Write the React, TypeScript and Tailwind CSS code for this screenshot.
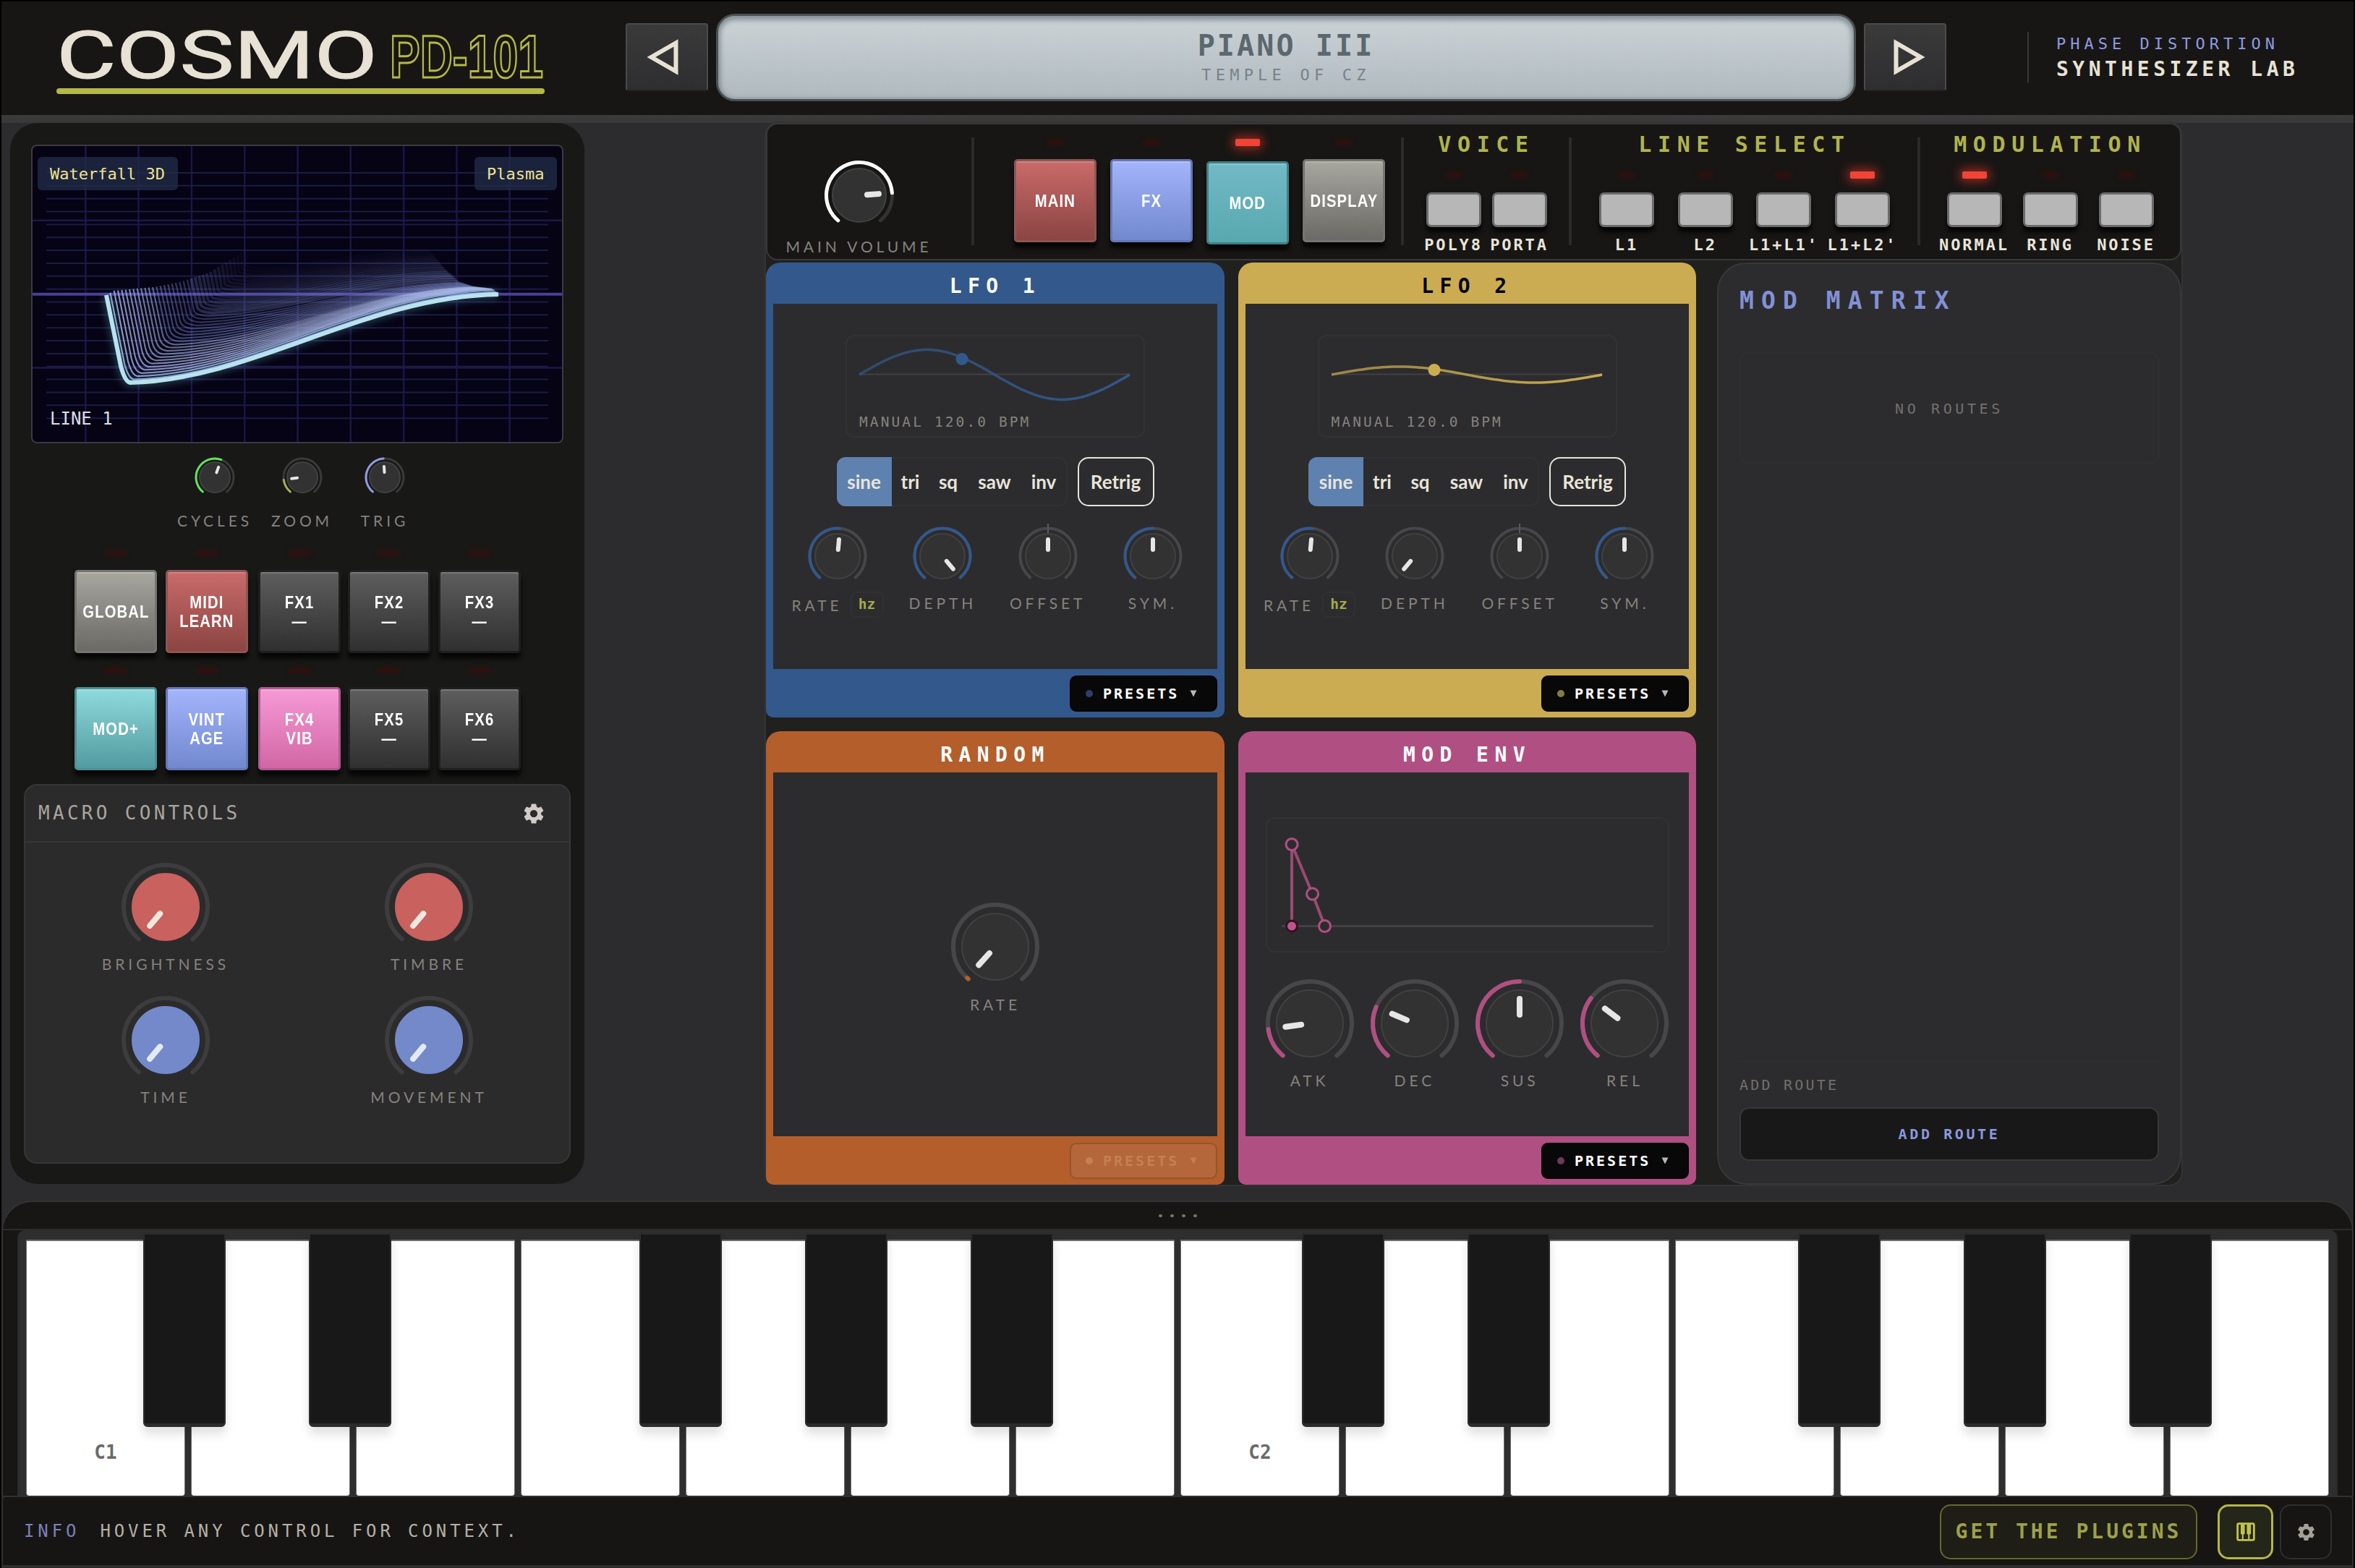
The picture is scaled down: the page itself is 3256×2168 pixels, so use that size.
import type { ReactNode } from 'react';
import clsx from 'clsx';
import { MdOutlinePiano, MdSettings } from 'react-icons/md';

const MONO = "font-['DejaVu_Sans_Mono',monospace]";
const LABEL = "font-['Lato',sans-serif] text-[21px] leading-[24px] tracking-[4.9px] text-[#85827d] whitespace-nowrap";

const BLUE = '#33588c';
const PINK = '#b04f82';

/* ---------- knobs ---------- */

function polar(c: number, r: number, deg: number) {
  const a = (deg * Math.PI) / 180;
  return [c + r * Math.sin(a), c - r * Math.cos(a)];
}

function arc(c: number, r: number, from: number, to: number) {
  const [x1, y1] = polar(c, r, from);
  const [x2, y2] = polar(c, r, to);
  return `M${x1} ${y1}A${r} ${r} 0 ${to - from > 180 ? 1 : 0} 1 ${x2} ${y2}`;
}

type KnobProps = {
  size: number;
  r: number;
  body: number;
  stroke: number;
  angle: number;
  hand: [number, number];
  handWidth: number;
  color?: string;
  fill?: string;
  rim?: string;
  track?: string;
  tip?: string;
  tick?: boolean;
};

function Knob({
  size,
  r,
  body,
  stroke,
  angle,
  hand,
  handWidth,
  color,
  fill = '#323232',
  rim = '#414141',
  track = '#47474a',
  tip = '#e6e6e6',
  tick,
}: KnobProps) {
  const c = size / 2;
  const [x1, y1] = polar(c, hand[0], angle);
  const [x2, y2] = polar(c, hand[1], angle);
  return (
    <svg width={size} height={size} viewBox={`0 0 ${size} ${size}`} className="block shrink-0">
      <path d={arc(c, r, -140, 140)} fill="none" stroke={track} strokeWidth={stroke} strokeLinecap="round" />
      {color && <path d={arc(c, r, -140, angle)} fill="none" stroke={color} strokeWidth={stroke} strokeLinecap="round" />}
      {tick && <path d={`M${c} 0V${c - body}`} stroke="#5a5a5c" strokeWidth={2} />}
      <circle cx={c} cy={c} r={body} fill={fill} stroke={rim} strokeWidth={2} />
      <path d={`M${x1} ${y1}L${x2} ${y2}`} stroke={tip} strokeWidth={handWidth} strokeLinecap="round" />
    </svg>
  );
}

const SmallKnob = (p: { angle: number; color?: string; tick?: boolean }) => (
  <Knob size={90} r={38.5} body={31} stroke={4} hand={[9, 23]} handWidth={6} {...p} />
);

const BigKnob = (p: { angle: number; color?: string; fill?: string; rim?: string; tip?: string; track?: string }) => (
  <Knob size={130} r={58} body={46} stroke={6} hand={[12, 34]} handWidth={8} {...p} />
);

const TinyKnob = (p: { angle: number; color: string }) => (
  <Knob size={64} r={26} body={21} stroke={3} hand={[7, 15]} handWidth={4} track="#3a3a3a" {...p} />
);

/* ---------- header ---------- */

function Logo() {
  return (
    <svg width="680" height="130" viewBox="0 -30 680 130" className="block overflow-visible">
      <text
        x="0"
        y="70"
        fontFamily="Roboto, sans-serif"
        fontSize="90"
        fill="#e8e2d5"
        stroke="#e8e2d5"
        strokeWidth="1"
        textLength="444"
        lengthAdjust="spacingAndGlyphs"
      >
        COSMO
      </text>
      <text
        x="461"
        y="69"
        fontFamily="Liberation Sans, sans-serif"
        fontWeight="700"
        fontSize="84"
        fill="none"
        stroke="#b4b845"
        strokeWidth="3"
        textLength="212"
        lengthAdjust="spacingAndGlyphs"
      >
        PD-101
      </text>
      <rect x="0" y="84" width="675" height="8" rx="4" fill="#b4b845" />
    </svg>
  );
}

function StepButton({ dir }: { dir: 'prev' | 'next' }) {
  return (
    <div className="flex h-[94px] w-[114px] items-center justify-center rounded-[4px] border-2 border-[#4a4a4b] border-b-[#232324] bg-linear-to-b from-[#3a3a3b] to-[#2e2e30]">
      <svg width="56" height="56" viewBox="0 0 56 56" className={clsx(dir === 'prev' && '-scale-x-100')}>
        <path d="M15.5 8.5V47.5L49.5 28Z" fill="none" stroke="#e8e2d5" strokeWidth="6" />
      </svg>
    </div>
  );
}

function Header() {
  return (
    <header className="flex h-[157px] shrink-0 items-start bg-[#171614]">
      <div className="mt-[6px] ml-[76px] w-[787px]">
        <Logo />
      </div>
      <div className="mt-[30px]">
        <StepButton dir="prev" />
      </div>
      <div
        className={clsx(
          MONO,
          'mt-[17px] ml-[11px] flex h-[121px] w-[1576px] flex-col items-center rounded-[26px] border-[3px] border-[#4b5053] bg-linear-to-b from-[#cbd3d7] to-[#b0b9be] pt-[17px] shadow-[inset_0_3px_6px_3px_rgba(70,84,90,0.5)]',
        )}
      >
        <div className="text-[40px] leading-[48px] font-bold tracking-[3.1px] text-[#5b686d]">PIANO III</div>
        <div className="mt-[3px] text-[22px] leading-[28px] tracking-[6.2px] text-[#76838a]">TEMPLE OF CZ</div>
      </div>
      <div className="mt-[30px] ml-[11px]">
        <StepButton dir="next" />
      </div>
      <div className={clsx(MONO, 'mt-[42px] ml-[112px] h-[70px] border-l-2 border-[#39393a] pl-[38px] whitespace-nowrap')}>
        <div className="mt-[3px] text-[22px] leading-[28px] tracking-[6px] text-[#8f9ae0]">PHASE DISTORTION</div>
        <div className="mt-[3px] text-[28px] leading-[36px] font-bold tracking-[5.5px] text-[#e8e2d5]">SYNTHESIZER LAB</div>
      </div>
    </header>
  );
}

/* ---------- pads and switches ---------- */

const PAD_TONES = {
  grey: 'bg-linear-to-b from-[#a7a69f] to-[#6b6a66] border-[#75746f]',
  red: 'bg-linear-to-b from-[#c96b6a] to-[#8b4542] border-[#8d5553]',
  dark: 'bg-linear-to-b from-[#5e5e5e] to-[#303030] border-[#1f1f1f]',
  teal: 'bg-linear-to-b from-[#8fdadd] to-[#529ba0] border-[#4f8f94]',
  tealFlat: 'bg-linear-to-b from-[#72b9c6] to-[#58a8ae] border-[#3f8086]',
  blue: 'bg-linear-to-b from-[#a4b4fb] to-[#7188cf] border-[#6678b4]',
  pink: 'bg-linear-to-b from-[#f59ad5] to-[#d266a5] border-[#b05c90]',
};

type Tone = keyof typeof PAD_TONES;

function Pad({ tone, lines }: { tone: Tone; lines: string[] }) {
  return (
    <div
      className={clsx(
        'flex h-[115px] w-[114px] flex-col items-center justify-center rounded-[5px] border-[3px] shadow-[0_8px_6px_rgba(0,0,0,0.75),inset_0_2px_1px_rgba(255,255,255,0.18)]',
        PAD_TONES[tone],
      )}
    >
      {lines.map((l) => (
        <div
          key={l}
          className="scale-x-[0.88] font-['Liberation_Sans',sans-serif] text-[23px] leading-[26px] font-bold tracking-[1.3px] whitespace-nowrap text-white"
        >
          {l}
        </div>
      ))}
    </div>
  );
}

function Led({ on, wide }: { on?: boolean; wide?: boolean }) {
  if (on) {
    return <div className="h-[10px] w-[34px] rounded-[2px] bg-[#ee4537] shadow-[0_0_14px_4px_rgba(226,50,38,0.6)]" />;
  }
  return <div className={clsx('h-[6px] rounded-full bg-[#3a0c0c] blur-[3px]', wide ? 'w-[30px]' : 'w-[22px]')} />;
}

function LedSlot({ on, wide, className }: { on?: boolean; wide?: boolean; className?: string }) {
  return (
    <div className={clsx('flex h-[10px] items-center justify-center', className)}>
      <Led on={on} wide={wide} />
    </div>
  );
}

function SwitchGroup({ title, cell, items, active }: { title: string; cell: string; items: string[]; active?: string }) {
  return (
    <div className={clsx(MONO, 'flex flex-1 flex-col items-center')}>
      <div className="mt-[11px] text-[30px] leading-[34px] font-bold tracking-[8.6px] whitespace-nowrap text-[#b0b44c]">{title}</div>
      <div className="mt-[20px] flex">
        {items.map((item) => (
          <div key={item} className={clsx('flex flex-col items-center', cell)}>
            <LedSlot on={item === active} />
            <div className="mt-[19px] h-[48px] w-[76px] rounded-[7px] border-[3px] border-[#6b6b6b] bg-[#b7b7b7] shadow-[0_7px_6px_rgba(0,0,0,0.8)]" />
            <div className="mt-[12px] text-[22px] leading-[26px] font-bold tracking-[2.9px] whitespace-nowrap text-[#e8e4da]">{item}</div>
          </div>
        ))}
      </div>
    </div>
  );
}

const Divider = () => <div className="mt-[18px] h-[149px] w-[4px] shrink-0 bg-[#2b2b2a]" />;

function ControlStrip() {
  const pads: { tone: Tone; label: string; on?: boolean }[] = [
    { tone: 'red', label: 'MAIN' },
    { tone: 'blue', label: 'FX' },
    { tone: 'tealFlat', label: 'MOD', on: true },
    { tone: 'grey', label: 'DISPLAY' },
  ];
  return (
    <div className="flex h-[190px] rounded-[16px] border-2 border-[#383839] bg-[#171614]">
      <div className="flex w-[253px] shrink-0 flex-col items-center">
        <div className="mt-[43px]">
          <Knob size={110} r={45.5} body={37} stroke={5} angle={86} hand={[11, 27]} handWidth={8} color="#ffffff" track="#333333" />
        </div>
        <div className={clsx(LABEL, 'mt-[4px]')}>MAIN VOLUME</div>
      </div>
      <div className="w-[29px] shrink-0" />
      <Divider />
      <div className="ml-[55px] flex gap-[19px]">
        {pads.map((p) => (
          <div key={p.label} className="w-[114px]">
            <LedSlot on={p.on} className="mt-[20px]" />
            <div className={p.on ? 'mt-[21px]' : 'mt-[18px]'}>
              <Pad tone={p.tone} lines={[p.label]} />
            </div>
          </div>
        ))}
      </div>
      <div className="w-[22px] shrink-0" />
      <Divider />
      <div className="flex w-[228px] shrink-0">
        <SwitchGroup title="VOICE" cell="w-[91px]" items={['POLY8', 'PORTA']} />
      </div>
      <Divider />
      <div className="flex w-[478px] shrink-0">
        <SwitchGroup title="LINE SELECT" cell="w-[108.7px]" items={['L1', 'L2', "L1+L1'", "L1+L2'"]} active="L1+L2'" />
      </div>
      <Divider />
      <SwitchGroup title="MODULATION" cell="w-[105px]" items={['NORMAL', 'RING', 'NOISE']} active="NORMAL" />
    </div>
  );
}

/* ---------- scope ---------- */

// heights of the two ends of the trace, from front (0) to back (1)
const LEFT_EDGE = [
  [0, 408],
  [0.05, 402],
  [0.34, 397],
  [0.53, 390],
  [0.74, 377],
  [1, 346],
];
const RIGHT_EDGE = [
  [0, 407],
  [0.07, 400],
  [0.34, 397],
  [0.56, 390],
  [0.75, 374],
  [0.9, 357],
  [1, 346],
];

function lookup(table: number[][], t: number) {
  const i = Math.max(1, table.findIndex((row) => row[0] >= t));
  const [t0, y0] = table[i - 1];
  const [t1, y1] = table[i];
  return y0 + ((y1 - y0) * (t - t0)) / (t1 - t0);
}

function trace(t: number) {
  const lx = 147 + 192 * t;
  const ly = lookup(LEFT_EDGE, t);
  const rx = 689 - 96 * t;
  const ry = lookup(RIGHT_EDGE, t);
  const dx = 176 + 164 * t;
  const dy = 529 - 158 * t;
  const w = rx - dx;
  const bend = 4 + 22 * t;
  return [
    `M${lx} ${ly}`,
    `L${lx + (dx - lx) * 0.7} ${ly + (dy - ly) * 0.82}`,
    `Q${dx - 3} ${dy - 1} ${dx + bend} ${dy}`,
    `C${dx + w * 0.34} ${dy - 4} ${rx - w * 0.36} ${ry + 3} ${rx} ${ry}`,
  ].join('');
}

const COLS = Array.from({ length: 9 }, (_, i) => 45 + 73.3 * (i + 1));
const ROWS = Array.from({ length: 20 }, (_, i) => 239 + 17.85 * i);
const TRACES = Array.from({ length: 36 }, (_, i) => 1 - i / 36);

function Scope() {
  return (
    <div className={clsx(MONO, 'relative h-[413px] w-[736px] overflow-hidden rounded-[8px] border-2 border-[#3d3940] bg-[#050314]')}>
      <svg width="732" height="409" viewBox="45 202 732 409" className="block">
        {COLS.map((x) => (
          <path key={x} d={`M${x} 202V611`} stroke="#1c1546" strokeWidth="2.5" />
        ))}
        {ROWS.map((y) => (
          <path key={y} d={`M64 ${y}H758`} stroke="#1a1d44" strokeWidth="2" />
        ))}
        <path d="M45 304.7H777M45 508.6H777" stroke="#1f174a" strokeWidth="2.5" />
        <path d="M45 406.8H777" stroke="#4a3f97" strokeWidth="4" />
        {TRACES.map((t) => (
          <path
            key={t}
            d={trace(t)}
            fill="none"
            stroke={t < 0.35 ? '#a9b5e6' : '#7f8cd0'}
            strokeWidth={t > 0.6 ? 4 : 2.2}
            opacity={0.03 + 0.85 * Math.pow(1 - t, 1.25)}
          />
        ))}
        <path d={trace(0)} fill="none" stroke="#69c4e0" strokeWidth="14" opacity="0.25" className="blur-[5px]" />
        <path d={trace(0)} fill="none" stroke="#b8e2ee" strokeWidth="6" />
      </svg>
      <div className="absolute top-[15px] left-[7px] flex h-[46px] w-[194px] items-center rounded-[6px] bg-[#202c46]/80 pl-[17px] text-[22px] text-[#f0e28c]">
        Waterfall 3D
      </div>
      <div className="absolute top-[15px] right-[7px] flex h-[46px] w-[114px] items-center rounded-[6px] bg-[#202c46]/80 pl-[17px] text-[22px] text-[#f0e28c]">
        Plasma
      </div>
      <div className="absolute bottom-[16px] left-[24px] text-[24px] leading-[32px] text-[#dcdce6]">LINE 1</div>
    </div>
  );
}

/* ---------- left panel ---------- */

function PadRow({ pads }: { pads: { tone: Tone; lines: string[] }[] }) {
  return (
    <div className="grid grid-cols-[126px_128px_124px_125px_114px] pl-[89px]">
      {pads.map((p) => (
        <div key={p.lines[0]} className="w-[114px]">
          <LedSlot wide />
          <div className="mt-[18px]">
            <Pad tone={p.tone} lines={p.lines} />
          </div>
        </div>
      ))}
    </div>
  );
}

const MACROS = [
  { label: 'BRIGHTNESS', fill: '#c9615f', tip: '#f0e8dc' },
  { label: 'TIMBRE', fill: '#c9615f', tip: '#f0e8dc' },
  { label: 'TIME', fill: '#7389ca', tip: '#e2ebf5' },
  { label: 'MOVEMENT', fill: '#7389ca', tip: '#e2ebf5' },
];

function LeftPanel() {
  return (
    <aside className="ml-[12px] flex h-[1467px] w-[794px] shrink-0 flex-col rounded-[38px] bg-[#181817] pt-[30px]">
      <div className="pl-[29px]">
        <Scope />
      </div>
      <div className="mt-[15px] flex pl-[223px]">
        <div className="flex w-[120px] flex-col items-center">
          <TinyKnob angle={20} color="#5ee45a" />
          <div className={clsx(LABEL, 'mt-[16px]')}>CYCLES</div>
        </div>
        <div className="flex w-[121px] flex-col items-center">
          <TinyKnob angle={-97} color="#a8ad55" />
          <div className={clsx(LABEL, 'mt-[16px]')}>ZOOM</div>
        </div>
        <div className="flex w-[108px] flex-col items-center">
          <TinyKnob angle={-4} color="#8f9ae0" />
          <div className={clsx(LABEL, 'mt-[16px]')}>TRIG</div>
        </div>
      </div>
      <div className="mt-[28px] flex flex-col gap-[19px]">
        <PadRow
          pads={[
            { tone: 'grey', lines: ['GLOBAL'] },
            { tone: 'red', lines: ['MIDI', 'LEARN'] },
            { tone: 'dark', lines: ['FX1', '—'] },
            { tone: 'dark', lines: ['FX2', '—'] },
            { tone: 'dark', lines: ['FX3', '—'] },
          ]}
        />
        <PadRow
          pads={[
            { tone: 'teal', lines: ['MOD+'] },
            { tone: 'blue', lines: ['VINT', 'AGE'] },
            { tone: 'pink', lines: ['FX4', 'VIB'] },
            { tone: 'dark', lines: ['FX5', '—'] },
            { tone: 'dark', lines: ['FX6', '—'] },
          ]}
        />
      </div>
      <section className="mt-[19px] ml-[19px] h-[525px] w-[756px] rounded-[18px] border-2 border-[#363638] bg-[#2b2b2c]">
        <div className={clsx(MONO, 'flex h-[79px] items-center justify-between border-b-2 border-[#363638] pr-[32px] pl-[18px]')}>
          <span className="text-[26px] tracking-[4.3px] text-[#aaa59d]">MACRO CONTROLS</span>
          <MdSettings size={34} color="#d0cbc4" />
        </div>
        <div className="mx-auto mt-[24px] grid w-[728px] grid-cols-2 gap-y-[28px]">
          {MACROS.map((m) => (
            <div key={m.label} className="flex flex-col items-center">
              <BigKnob angle={-140} fill={m.fill} rim={m.fill} tip={m.tip} track="#3d3d3f" />
              <div className={clsx(LABEL, 'mt-[2px]')}>{m.label}</div>
            </div>
          ))}
        </div>
      </section>
    </aside>
  );
}

/* ---------- modules ---------- */

type ModuleProps = {
  title: string;
  bg: string;
  dot: string;
  titleColor?: string;
  disabled?: boolean;
  children: ReactNode;
};

function Module({ title, bg, dot, titleColor = 'text-white', disabled, children }: ModuleProps) {
  return (
    <section className={clsx('flex flex-col rounded-t-[20px] rounded-b-[10px] px-[10px]', bg)}>
      <div className={clsx(MONO, titleColor, 'flex h-[57px] items-center justify-center pt-[8px] text-[28px] leading-[36px] font-bold tracking-[8.4px]')}>
        {title}
      </div>
      <div className="flex flex-1 flex-col items-center bg-[#2c2c2e]">{children}</div>
      <div className="flex h-[67px] items-start justify-end pt-[9px]">
        <div
          className={clsx(
            MONO,
            'flex h-[50px] w-[204px] items-center rounded-[9px] pl-[20px] text-[20px] font-bold tracking-[3px]',
            disabled ? 'border-2 border-[#96552c] bg-[#b4673a] text-[#c6804f]' : 'border-2 border-[#050505] bg-[#080808] text-white',
          )}
        >
          <span className={clsx('h-[10px] w-[10px] rounded-full', dot)} />
          <span className="ml-[14px]">PRESETS</span>
          <svg width="10" height="10" viewBox="0 0 10 10" className="ml-[15px]">
            <path d="M0.5 0.5H9.5L5 9.5Z" fill={disabled ? '#c6804f' : '#b8b8b8'} />
          </svg>
        </div>
      </div>
    </section>
  );
}

function sine(amp: number) {
  let d = '';
  for (let i = 0; i <= 80; i++) {
    const x = 17 + (374 * i) / 80;
    const y = 53 - amp * Math.sin((i / 80) * Math.PI * 2);
    d += `${i ? 'L' : 'M'}${x.toFixed(1)} ${y.toFixed(1)}`;
  }
  return d;
}

function LfoBody({ id, color, amp, dotY, depth }: { id: string; color: string; amp: number; dotY: number; depth: number }) {
  return (
    <>
      <div className="mt-[43px] h-[142px] w-[414px] rounded-[12px] border-2 border-[#323234]">
        <svg width="410" height="100" viewBox="0 0 410 100" className="block">
          <defs>
            <linearGradient id={id} gradientUnits="userSpaceOnUse" x1="17" y1="0" x2="391" y2="0">
              <stop offset="0" stopColor={color} stopOpacity="0.7" />
              <stop offset="0.3" stopColor={color} stopOpacity="0.75" />
              <stop offset="1" stopColor={color} stopOpacity="1" />
            </linearGradient>
          </defs>
          <path d="M17 52.5H391" stroke="#414143" strokeWidth="2" />
          <path d={sine(amp)} fill="none" stroke={`url(#${id})`} strokeWidth="3.5" />
          <circle cx="159" cy={dotY} r="8.5" fill={color} />
        </svg>
        <div className={clsx(MONO, 'mt-[6px] pl-[17px] text-[19.5px] leading-[26px] tracking-[3.1px] text-[#85837e]')}>MANUAL 120.0 BPM</div>
      </div>
      <div className="mt-[27px] flex gap-[14px] font-['Lato',sans-serif] text-[26px] leading-[30px] font-bold text-[#e8e4da]">
        <div className="flex h-[68px] w-[319px] items-center rounded-[12px] border-2 border-[#313133]">
          <div className="-my-[1px] -ml-[2px] flex h-[68px] w-[76px] items-center justify-center rounded-l-[12px] bg-[#5e81b0]">sine</div>
          <div className="w-[52px] text-center">tri</div>
          <div className="w-[53px] text-center">sq</div>
          <div className="w-[75px] text-center">saw</div>
          <div className="w-[61px] text-center">inv</div>
        </div>
        <div className="flex h-[68px] w-[106px] items-center justify-center rounded-[15px] border-[2.5px] border-[#e8e4da]">Retrig</div>
      </div>
      <div className="mt-[24px] grid grid-cols-[repeat(4,145.3px)] justify-items-center">
        <SmallKnob angle={5} color={BLUE} />
        <SmallKnob angle={depth} color={depth > 0 ? BLUE : undefined} />
        <SmallKnob angle={0} tick />
        <SmallKnob angle={0} color={BLUE} />
      </div>
      <div className="mt-[4px] grid grid-cols-[repeat(4,145.3px)] items-start justify-items-center">
        <div className="flex items-center">
          <div className={clsx(LABEL, 'pt-[2px]')}>RATE</div>
          <div className={clsx(MONO, 'ml-[11px] flex h-[36px] w-[46px] items-center justify-center rounded-[8px] border-2 border-[#313133] text-[19.5px] font-bold text-[#a3a84e]')}>
            hz
          </div>
        </div>
        <div className={clsx(LABEL, 'pt-[4px]')}>DEPTH</div>
        <div className={clsx(LABEL, 'pt-[4px]')}>OFFSET</div>
        <div className={clsx(LABEL, 'pt-[4px]')}>SYM.</div>
      </div>
    </>
  );
}

function EnvBody() {
  const knobs = [
    { label: 'ATK', angle: -98 },
    { label: 'DEC', angle: -67 },
    { label: 'SUS', angle: 0 },
    { label: 'REL', angle: -53 },
  ];
  return (
    <>
      <svg width="558" height="187" viewBox="1749 1129 558 187" className="mt-[62px] block">
        <rect x="1750" y="1130" width="556" height="185" rx="12" fill="none" stroke="#323234" strokeWidth="2" />
        <path d="M1771 1279.5H2285" stroke="#414143" strokeWidth="3" />
        <path d="M1785 1279V1166.5L1813.6 1235L1830.5 1279" fill="none" stroke="#9a4a72" strokeWidth="4" />
        <circle cx="1785" cy="1279.5" r="7.5" fill="#c0558d" stroke="#33131f" strokeWidth="3" />
        <circle cx="1785" cy="1166.5" r="8" fill="#2c2c2e" stroke={PINK} strokeWidth="3" />
        <circle cx="1813.6" cy="1235" r="8" fill="#2c2c2e" stroke={PINK} strokeWidth="3" />
        <circle cx="1830.5" cy="1279.5" r="8" fill="#2c2c2e" stroke={PINK} strokeWidth="3" />
      </svg>
      <div className="mt-[33px] grid grid-cols-[repeat(4,145.3px)]">
        {knobs.map((k) => (
          <div key={k.label} className="flex flex-col items-center">
            <BigKnob angle={k.angle} color={PINK} />
            <div className={clsx(LABEL, 'mt-[2px]')}>{k.label}</div>
          </div>
        ))}
      </div>
    </>
  );
}

function ModMatrix() {
  return (
    <section className={clsx(MONO, 'flex flex-col rounded-[40px] border-2 border-[#38383a] bg-[#2c2c2e] px-[29px]')}>
      <h2 className="mt-[30px] text-[33px] leading-[42px] font-bold tracking-[10.1px] text-[#8291d6]">MOD MATRIX</h2>
      <div className="mt-[50px] flex h-[154px] justify-center rounded-[12px] border-2 border-[#2f2f31] pt-[62px] text-[20px] leading-[28px] tracking-[4.6px] text-[#73716c]">
        NO ROUTES
      </div>
      <div className="flex-1" />
      <div className="border-t-2 border-[#2f2f31] pt-[18px] text-[20px] leading-[28px] tracking-[3.2px] text-[#73706a]">ADD ROUTE</div>
      <div className="mt-[17px] mb-[31px] flex h-[74px] items-center justify-center rounded-[13px] border-2 border-[#38383a] bg-[#181818] text-[20px] font-bold tracking-[3.6px] text-[#8c98de]">
        ADD ROUTE
      </div>
    </section>
  );
}

function Workspace() {
  return (
    <main className="ml-[251px] flex h-[1468px] w-[1957px] shrink-0 flex-col rounded-[18px] bg-[#20201f] ring-2 ring-[#333335]">
      <ControlStrip />
      <div className="mt-[3px] grid flex-1 grid-cols-[634px_633px_642px] grid-rows-[629px_627px] gap-y-[19px]">
        <Module title="LFO 1" bg="bg-[#33588c]" dot="bg-[#2b4068]">
          <LfoBody id="lfo1" color={BLUE} amp={34.5} dotY={31.5} depth={140} />
        </Module>
        <div className="ml-[19px] grid w-[633px]">
          <Module title="LFO 2" bg="bg-[#ccac52]" dot="bg-[#857c45]" titleColor="text-black">
            <LfoBody id="lfo2" color="#ccac52" amp={11} dotY={46.5} depth={-140} />
          </Module>
        </div>
        <div className="row-span-2 ml-[48px] grid w-[642px]">
          <ModMatrix />
        </div>
        <Module title="RANDOM" bg="bg-[#b35e2b]" dot="bg-[#c6804f]" disabled>
          <div className="mt-[176px] flex flex-col items-center">
            <BigKnob angle={-138} color="#b35e2b" />
            <div className={clsx(LABEL, 'mt-[3px]')}>RATE</div>
          </div>
        </Module>
        <div className="ml-[19px] grid w-[633px]">
          <Module title="MOD ENV" bg="bg-[#b04f82]" dot="bg-[#6e3a56]">
            <EnvBody />
          </Module>
        </div>
      </div>
    </main>
  );
}

/* ---------- keyboard ---------- */

const BLACK_KEYS = [1, 2, 4, 5, 6, 8, 9, 11, 12, 13];

function Keyboard() {
  return (
    <section className="mt-[22px] flex h-[408px] shrink-0 flex-col overflow-hidden rounded-t-[42px] border-2 border-b-0 border-[#333334] bg-[#171614]">
      <div className="flex h-[39px] shrink-0 items-center justify-center gap-[11px] border-b-2 border-[#2b2b2b]">
        {[0, 1, 2, 3].map((i) => (
          <span key={i} className="h-[4px] w-[5px] rounded-full bg-[#77756f]" />
        ))}
      </div>
      <div className="relative mr-[20px] ml-[20px] flex flex-1 gap-[8px] rounded-t-[10px] border-x-2 border-[#2a2a2a] bg-[#2e2e2e] pt-[13px] pr-[10px] pl-[10px]">
        {Array.from({ length: 14 }, (_, i) => (
          <div
            key={i}
            className={clsx(
              MONO,
              'flex flex-1 items-end justify-center rounded-b-[4px] border-t-2 border-r border-l border-[#6e6e6e] bg-white pb-[44px] text-[26px] leading-[32px] font-bold text-[#6b6b6b]',
            )}
          >
            {i % 7 === 0 ? `C${i / 7 + 1}` : ''}
          </div>
        ))}
        {BLACK_KEYS.map((k) => (
          <div
            key={k}
            className="absolute top-[4px] h-[268px] w-[114px] rounded-b-[6px] border-2 border-b-[5px] border-[#2b2b2b] bg-[#181818] shadow-[0_10px_14px_rgba(0,0,0,0.12)]"
            style={{ left: 172 + (k - 1) * 228.83 }}
          />
        ))}
      </div>
    </section>
  );
}

function Footer() {
  return (
    <footer className={clsx(MONO, 'flex h-[98px] shrink-0 items-center rounded-t-[6px] border-2 border-[#303030] bg-[#161513] pr-[28px] pl-[29px]')}>
      <span className="text-[24px] tracking-[4.9px] text-[#7b80b8]">INFO</span>
      <span className="ml-[28px] text-[24px] tracking-[4.9px] text-[#b5b0a6]">HOVER ANY CONTROL FOR CONTEXT.</span>
      <div className="mt-[2px] ml-auto flex h-[76px] w-[356px] items-center justify-center rounded-[15px] border-[2.5px] border-[#65682f] bg-[#1e1d16] text-[28px] font-bold tracking-[4px] whitespace-nowrap text-[#9da148]">
        GET THE PLUGINS
      </div>
      <div className="mt-[2px] ml-[28px] flex h-[76px] w-[77px] items-center justify-center rounded-[15px] border-[3px] border-[#b4b845] bg-[#25261a]">
        <MdOutlinePiano size={34} color="#bfc34c" />
      </div>
      <div className="mt-[2px] ml-[9px] flex h-[76px] w-[72px] items-center justify-center rounded-[15px] border-2 border-[#2e2e2e]">
        <MdSettings size={29} color="#a5a19a" />
      </div>
    </footer>
  );
}

export default function App() {
  return (
    <div className="flex h-[2168px] w-[3256px] flex-col overflow-hidden border-2 border-b-0 border-black bg-[#2c2c2e]">
      <Header />
      <div className="h-[11px] shrink-0 bg-linear-to-b from-[#3b3b3b] to-[#383839]" />
      <div className="flex shrink-0">
        <LeftPanel />
        <Workspace />
      </div>
      <Keyboard />
      <Footer />
    </div>
  );
}
